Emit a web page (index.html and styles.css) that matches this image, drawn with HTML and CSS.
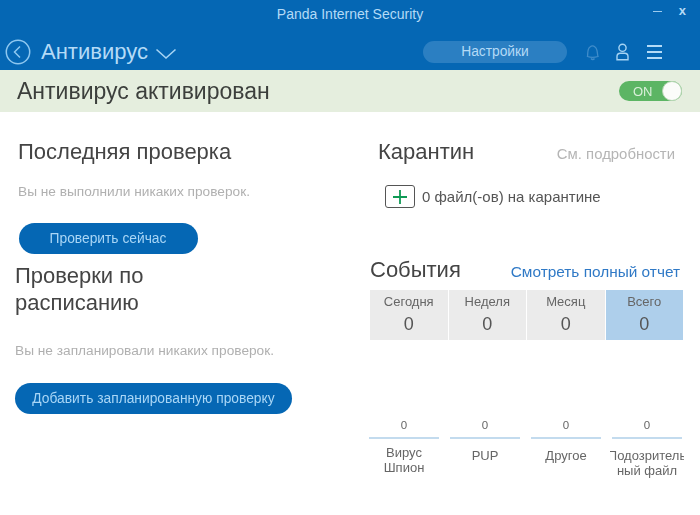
FILE: index.html
```html
<!DOCTYPE html>
<html lang="ru">
<head>
<meta charset="utf-8">
<title>Panda Internet Security</title>
<link rel="stylesheet" href="styles.css">
</head>
<body>
<div class="app">
  <header class="header">
    <div class="titlebar">
      <div class="title">Panda Internet Security</div>
      <div class="winctl"><span class="min"></span><span class="close">x</span></div>
    </div>
    <nav class="nav">
      <svg class="back" width="26" height="26" viewBox="0 0 26 26" fill="none" stroke="#8fc8f0" stroke-width="1.5"><circle cx="13" cy="13" r="11.7"/><path d="M15 7.5 9.5 13l5.5 5.5"/></svg>
      <div class="crumb">Антивирус</div>
      <svg class="chev" width="22" height="12" viewBox="0 0 22 12" fill="none" stroke="#a6d4f4" stroke-width="1.6"><path d="M1.5 1.5 11 10l9.5-8.500"/></svg>
      <div class="settings">Настройки</div>
      <svg class="bell" width="15" height="17" viewBox="0 0 15 17" fill="none" stroke="#3f8cca" stroke-width="1.300"><path d="M2.500 12.500C3 10 2 5 5 3c1.500-1.400 3.500-1.400 5 0 3 2 2 7 3 9.500-3.500 1-7.500 1-10.500 0zM6 14.500c1 1.300 2.500 1.300 3.500 0"/></svg>
      <svg class="user" width="13" height="18" viewBox="0 0 13 18" fill="none" stroke="#a6d4f4" stroke-width="1.400"><circle cx="6.500" cy="4.800" r="3.600"/><path d="M1 16.800v-3.300c0-2 1.500-3.300 3.300-3.300h4.400c1.800 0 3.300 1.300 3.300 3.300v3.300z"/></svg>
      <div class="burger"><span></span><span></span><span></span></div>
    </nav>
  </header>

  <section class="banner">
    <h1 class="banner-title">Антивирус активирован</h1>
    <div class="toggle"><span class="toggle-label">ON</span><span class="knob"></span></div>
  </section>

  <main class="main">
    <div class="col-left">
      <section class="last-scan">
        <h2 class="heading">Последняя проверка</h2>
        <p class="muted">Вы не выполнили никаких проверок.</p>
        <div class="btn btn-scan">Проверить сейчас</div>
      </section>
      <section class="scheduled">
        <h2 class="heading heading-wrap">Проверки по<br>расписанию</h2>
        <p class="muted muted-sched">Вы не запланировали никаких проверок.</p>
        <div class="btn btn-add">Добавить запланированную проверку</div>
      </section>
    </div>

    <div class="col-right">
      <section class="quarantine">
        <div class="row-head">
          <h2 class="heading">Карантин</h2>
          <a class="details">См. подробности</a>
        </div>
        <div class="q-row">
          <div class="plus"><svg width="16" height="16" viewBox="0 0 16 16" stroke="#0f9a55" stroke-width="1.800"><path d="M8 1v14M1 8h14"/></svg></div>
          <span class="q-text">0 файл(-ов) на карантине</span>
        </div>
      </section>

      <section class="events">
        <div class="row-head events-head">
          <h2 class="heading">События</h2>
          <a class="report">Смотреть полный отчет</a>
        </div>
        <div class="tabs">
          <div class="tab"><span class="tab-name">Сегодня</span><span class="tab-num">0</span></div>
          <div class="tab"><span class="tab-name">Неделя</span><span class="tab-num">0</span></div>
          <div class="tab"><span class="tab-name">Месяц</span><span class="tab-num">0</span></div>
          <div class="tab tab-active"><span class="tab-name">Всего</span><span class="tab-num">0</span></div>
        </div>
        <div class="stats">
          <div class="stat"><div class="stat-num">0</div><div class="stat-label">Вирус<br>Шпион</div></div>
          <div class="stat"><div class="stat-num">0</div><div class="stat-label stat-one">PUP</div></div>
          <div class="stat"><div class="stat-num">0</div><div class="stat-label stat-one">Другое</div></div>
          <div class="stat"><div class="stat-num">0</div><div class="stat-label stat-clip"><span>Подозритель</span><span>ный файл</span></div></div>
        </div>
      </section>
    </div>
  </main>
</div>
</body>
</html>
```

FILE: styles.css
```css
* { box-sizing: border-box; }
html, body { margin: 0; height: 100%; }
body { background: #fff; font-family: "Liberation Sans", Arial, sans-serif; color: #444; overflow: hidden; }
.app { width: 700px; height: 515px; display: flex; flex-direction: column; filter: blur(0.4px); }

.header { height: 70px; background: #0567b4; flex: none; }
.titlebar { height: 30px; position: relative; display: flex; justify-content: center; align-items: center; }
.title { font-size: 14px; color: #b4daf6; margin-top: -3px; }
.winctl { position: absolute; right: 14px; top: 5px; display: flex; align-items: center; gap: 17px; }
.min { width: 9px; height: 1.500px; background: #9ccbee; margin-top: 1px; }
.close { font-size: 13px; font-weight: 700; color: #b4daf6; line-height: 12px; }
.nav { height: 40px; display: flex; align-items: center; padding: 0 38px 0 5px; }
.back { flex: none; margin-top: 4px; }
.crumb { font-size: 22px; color: #b4dbf7; margin-left: 10px; margin-top: 4px; }
.chev { flex: none; margin-left: 7px; margin-top: 7px; }
.settings { flex: none; width: 144px; height: 22px; margin-left: auto; margin-top: 4px; border-radius: 11px; background: #2b7fc2; color: #b4daf6; font-size: 13.800px; line-height: 22px; text-align: center; }
.bell { flex: none; margin-left: 18px; margin-top: 5px; }
.user { flex: none; margin-left: 16px; margin-top: 4px; }
.burger { width: 15px; margin-left: 18px; margin-top: 4px; display: flex; flex-direction: column; gap: 4px; flex: none; }
.burger span { height: 2px; background: #b4dbf7; }

.banner { height: 42px; flex: none; background: #e5eede; display: flex; align-items: center; justify-content: space-between; padding: 0 18px 0 17px; }
.banner-title { margin: 0; font-size: 23px; font-weight: 400; color: #3c3f3c; }
.toggle { width: 63px; height: 20px; border-radius: 10px; background: #5cb564; display: flex; align-items: center; justify-content: space-between; padding: 0 0 0 14px; }
.toggle-label { color: #d9efd9; font-size: 13px; }
.knob { width: 20px; height: 20px; border-radius: 50%; background: #fbfcfa; border: 1px solid #b7d6b4; }

.main { flex: 1; display: flex; }
.col-left { width: 360px; flex: none; padding: 26px 0 0 15px; }
.heading { margin: 0; font-size: 22px; font-weight: 400; color: #444; line-height: 27px; }
.last-scan { padding-left: 3px; }
.muted { margin: 0; font-size: 13.700px; color: #b0b0b0; }
.last-scan .muted { margin-top: 19px; }
.btn { border-radius: 16px; height: 31px; background: #0567b4; color: #a9d6f6; font-size: 13.800px; line-height: 31px; text-align: center; }
.btn-scan { width: 179px; margin: 24px 0 0 1px; padding-right: 1px; }
.scheduled { margin-top: 8px; }
.muted-sched { margin-top: 27px; }
.btn-add { width: 277px; margin-top: 25px; }

.col-right { flex: 1; padding: 26px 17px 0 10px; }
.row-head { display: flex; justify-content: space-between; align-items: center; }
.quarantine { padding: 0 8px 0 8px; }
.details { font-size: 14.900px; color: #b5b5b5; margin-top: 4px; }
.q-row { display: flex; align-items: center; margin-top: 20px; padding-left: 7px; }
.plus { width: 30px; height: 23px; border: 1px solid #555; border-radius: 3px; display: flex; align-items: center; justify-content: center; }
.q-text { font-size: 15px; color: #555; margin-left: 7px; }

.events { margin-top: 48px; }
.events-head { padding-right: 3px; height: 27px; }
.report { font-size: 15.400px; color: #2f79c6; margin-top: 4px; }
.tabs { display: grid; grid-template-columns: repeat(4, 1fr); gap: 1px; margin-top: 7px; height: 50px; }
.tab { background: #ebebeb; display: flex; flex-direction: column; align-items: center; padding-top: 5px; }
.tab-active { background: #aecfeb; }
.tab-name { font-size: 13px; color: #666; line-height: 14px; }
.tab-num { font-size: 18px; color: #555; line-height: 22px; margin-top: 4px; }
.stats { display: grid; grid-template-columns: repeat(4, 70px); column-gap: 11px; margin: 77px 0 0 -1px; }
.stat { display: flex; flex-direction: column; align-items: center; }
.stat-num { width: 100%; text-align: center; font-size: 11.500px; color: #666; line-height: 14px; padding: 1px 0 5px; border-bottom: 2px solid #c3dbee; }
.stat-label { font-size: 13px; line-height: 15px; color: #666; text-align: center; margin-top: 6px; width: 100%; }
.stat-one { margin-top: 9px; }
.stat-clip { width: 74px; height: 34px; margin-top: 9px; overflow: hidden; display: flex; flex-direction: column; align-items: center; }
.stat-clip span { flex: none; white-space: nowrap; }
```
